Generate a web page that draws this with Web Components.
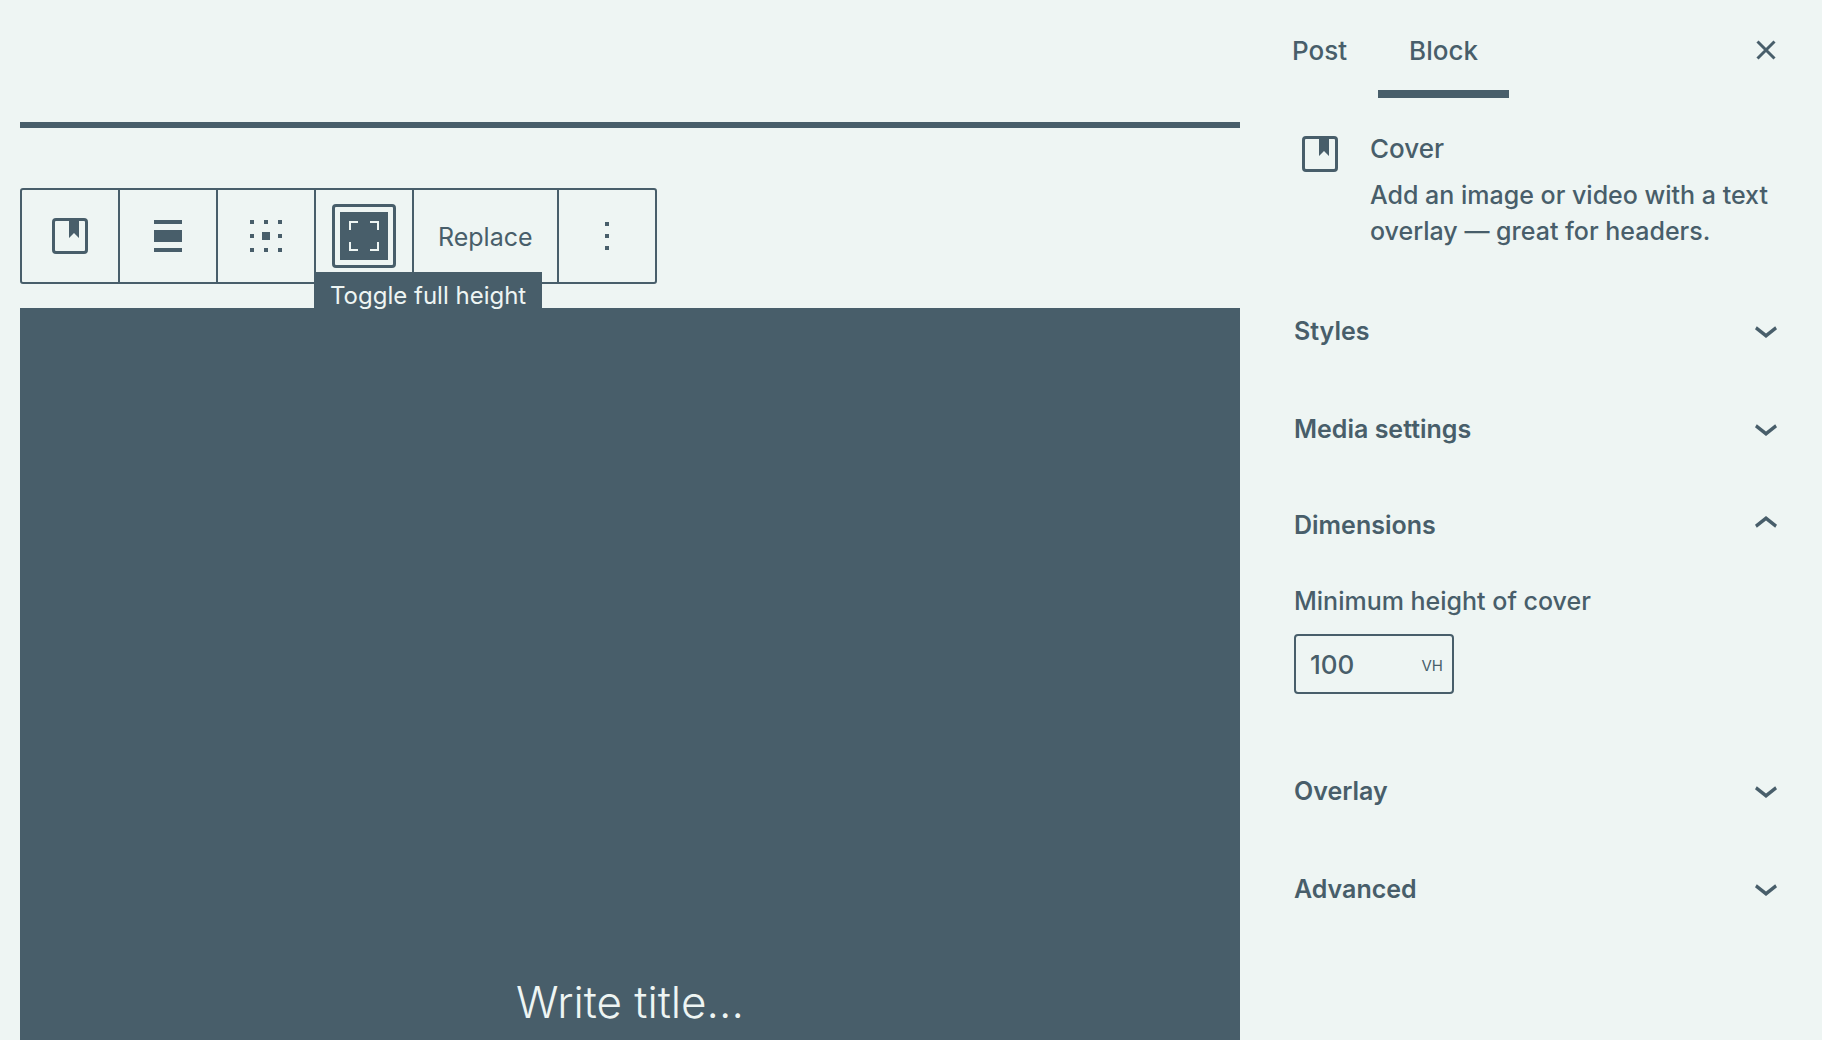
<!DOCTYPE html>
<html lang="en">
<head>
<meta charset="utf-8">
<title>Block editor</title>
<style>
  :root {
    --ink: #485e6a;
    --paper: #eef5f3;
  }
  html, body { height: 100%; margin: 0; }
  body {
    background: var(--paper);
    color: var(--ink);
    font: 400 25px/36px Inter, "Liberation Sans", sans-serif;
  }
</style>
</head>
<body>
<editor-app>
  <block-toolbar slot="editor"></block-toolbar>
  <cover-block slot="editor">Write title...</cover-block>
  <settings-sidebar slot="sidebar"></settings-sidebar>
</editor-app>

<script>
const ICONS = {
  cover: '<rect x="7.5" y="7.5" width="33" height="33" rx="2.5" fill="none" stroke="currentColor" stroke-width="3"/><path d="M23 8h10v18l-5-5-5 5z"/>',
  align: '<path d="M10 8h28v4H10zM10 18h28v12H10zM10 36h28v4H10z"/>',
  position: '<path d="M8 8h4v4H8zM22 8h4v4h-4zM36 8h4v4h-4zM8 22h4v4H8zM36 22h4v4h-4zM8 36h4v4H8zM22 36h4v4h-4zM36 36h4v4h-4zM20 20h8v8h-8z"/>',
  fullscreen: '<path fill="none" stroke="currentColor" stroke-width="2" d="M10 18v-8H18M30 10h8V18M38 30v8H30M18 38h-8V30"/>',
  more: '<path d="M22 10h4v4h-4zM22 22h4v4h-4zM22 34h4v4h-4z"/>',
  close: '<path fill="none" stroke="currentColor" stroke-width="3" d="M15.500 15.500l17 17M32.500 15.500l-17 17"/>',
  down: '<path d="M35 23.200L24 32l-11-8.800 1.800-2.900L24 27.500l9.200-7.200z"/>',
  up: '<path d="M13 24.800L24 16l11 8.800-1.800 2.900L24 20.500l-9.200 7.200z"/>'
};

const BASE = `
  *, *::before { box-sizing: border-box; }
  button, input { font: inherit; color: inherit; background: none; border: 0; margin: 0; padding: 0; border-radius: 0; outline: 0; }
  button { cursor: pointer; text-align: left; }
`;

class BaseElement extends HTMLElement {
  connectedCallback() {
    if (this.shadowRoot) return;
    this.attachShadow({ mode: "open" }).innerHTML = `<style>${BASE}${this.css()}</style>${this.html()}`;
  }
  css() { return ""; }
  html() { return "<slot></slot>"; }
}

customElements.define("ui-icon", class extends BaseElement {
  css() { return `:host { display: block; flex: none; width: 48px; height: 48px; } svg { display: block; }`; }
  html() {
    return `<svg width="48" height="48" viewBox="0 0 48 48" fill="currentColor" aria-hidden="true">${ICONS[this.getAttribute("name")]}</svg>`;
  }
});

customElements.define("editor-app", class extends BaseElement {
  css() { return `
    :host { display: grid; grid-template-columns: minmax(0, 1fr) 582px; min-height: 100%; }
    main { display: flex; flex-direction: column; padding-left: 20px; padding-top: 122px; }
    main::before { content: ""; height: 6px; margin-bottom: 60px; background: var(--ink); }
  `; }
  html() { return `<main><slot name="editor"></slot></main><slot name="sidebar"></slot>`; }
});

customElements.define("tool-button", class extends BaseElement {
  css() { return `
    :host { display: flex; position: relative; border-left: 2px solid var(--ink); }
    :host(:first-of-type) { border-left: 0; }
    button { display: flex; align-items: center; justify-content: center; min-width: 96px; height: 92px; }
    :host([wide]) button { padding: 2px 24px 0; }
    .pressed { display: flex; padding: 5px; border: 3px solid var(--ink); border-radius: 4px; }
    .pressed ui-icon { background: var(--ink); color: var(--paper); }
    .tip {
      position: absolute; z-index: 1; top: 82px; left: -2px; padding: 6px 16px 0; height: 42px;
      font-size: 24px; white-space: nowrap; background: var(--ink); color: var(--paper);
    }
  `; }
  html() {
    const icon = this.getAttribute("icon");
    const tip = this.getAttribute("tip");
    const glyph = icon ? `<ui-icon name="${icon}"></ui-icon>` : "<slot></slot>";
    return `<button type="button" aria-label="${this.getAttribute("label")}" ${tip ? 'aria-pressed="true"' : ""}>
      ${tip ? `<span class="pressed">${glyph}</span>` : glyph}</button>
      ${tip ? `<span class="tip" role="tooltip">${tip}</span>` : ""}`;
  }
});

customElements.define("block-toolbar", class extends BaseElement {
  css() { return `
    :host { display: flex; align-self: flex-start; margin-bottom: 24px; border: 2px solid var(--ink); border-radius: 3px; }
  `; }
  html() { return `
    <tool-button icon="cover" label="Cover"></tool-button>
    <tool-button icon="align" label="Align"></tool-button>
    <tool-button icon="position" label="Change content position"></tool-button>
    <tool-button icon="fullscreen" label="Toggle full height" tip="Toggle full height"></tool-button>
    <tool-button wide label="Replace">Replace</tool-button>
    <tool-button icon="more" label="Options"></tool-button>`; }
});

customElements.define("cover-block", class extends BaseElement {
  css() { return `
    :host { display: flex; flex: 1; align-items: flex-end; justify-content: center; padding-bottom: 10px;
      background: var(--ink); color: var(--paper); }
    p { margin: 0; font-size: 44px; line-height: 56px; font-weight: 300; }
  `; }
  html() { return `<p><slot></slot></p>`; }
});

customElements.define("sidebar-panel", class extends BaseElement {
  css() { return `
    :host { display: block; }
    h2 { margin: 0; font: inherit; font-weight: 600; }
    button { display: flex; align-items: center; justify-content: space-between; width: 100%; height: 98px; padding: 0 32px 0 54px; }
    .label { padding-top: 2px; }
    :host([open]) button { height: 94px; }
    .body { padding: 12px 32px 47px 54px; }
  `; }
  html() {
    const open = this.hasAttribute("open");
    return `<h2><button type="button" aria-expanded="${open}"><span class="label">${this.getAttribute("heading")}</span><ui-icon name="${open ? "up" : "down"}"></ui-icon></button></h2>
      ${open ? '<div class="body"><slot></slot></div>' : ""}`;
  }
});

customElements.define("unit-field", class extends BaseElement {
  css() { return `
    :host { display: block; }
    label { display: block; margin-bottom: 15px; font-weight: 500; }
    .box { display: flex; align-items: center; width: 160px; height: 60px; padding: 0 9px 0 14px; border: 2px solid var(--ink); border-radius: 4px; }
    input { flex: 1; min-width: 0; height: 56px; font-size: 26px; font-weight: 500; }
    .unit { padding-top: 4px; font-size: 15px; }
  `; }
  html() { return `
    <label for="size"><slot></slot></label>
    <div class="box"><input id="size" type="text" inputmode="numeric" value="${this.getAttribute("value")}"><span class="unit">${this.getAttribute("unit")}</span></div>`; }
});

customElements.define("settings-sidebar", class extends BaseElement {
  css() { return `
    :host { display: block; }
    header { display: flex; align-items: center; justify-content: space-between; padding: 0 32px 0 21px; }
    .close { padding-top: 2px; }
    .tabs { display: flex; }
    .tabs button { height: 98px; padding: 4px 31px 0; font-size: 26px; font-weight: 500; }
    .tabs [aria-selected="true"] { box-shadow: inset 0 -8px var(--ink); }
    .card { display: flex; gap: 26px; padding: 32px 40px 32px 56px; }
    .text { padding-top: 1px; font-weight: 500; }
    h1 { margin: 0 0 10px; font: inherit; font-size: 26px; }
    p { margin: 0; }
  `; }
  html() { return `
    <header>
      <div class="tabs" role="tablist">
        <button type="button" role="tab" aria-selected="false">Post</button>
        <button type="button" role="tab" aria-selected="true">Block</button>
      </div>
      <button class="close" type="button" aria-label="Close settings"><ui-icon name="close"></ui-icon></button>
    </header>
    <section class="card">
      <ui-icon name="cover"></ui-icon>
      <div class="text">
        <h1>Cover</h1>
        <p>Add an image or video with a text overlay — great for headers.</p>
      </div>
    </section>
    <sidebar-panel heading="Styles"></sidebar-panel>
    <sidebar-panel heading="Media settings"></sidebar-panel>
    <sidebar-panel heading="Dimensions" open>
      <unit-field value="100" unit="VH">Minimum height of cover</unit-field>
    </sidebar-panel>
    <sidebar-panel heading="Overlay"></sidebar-panel>
    <sidebar-panel heading="Advanced"></sidebar-panel>`; }
});
</script>
</body>
</html>
